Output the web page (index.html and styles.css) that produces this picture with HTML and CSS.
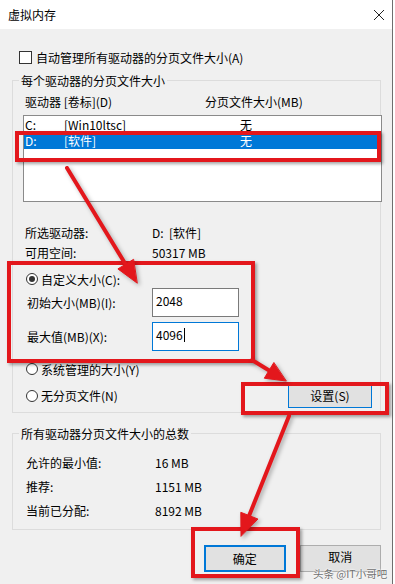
FILE: index.html
```html
<!DOCTYPE html>
<html lang="zh-CN">
<head>
<meta charset="utf-8">
<title>虚拟内存</title>
<link rel="stylesheet" href="styles.css">
</head>
<body>
<div class="window">
  <div class="titlebar">
    <span class="title">虚拟内存</span>
    <svg class="close" width="12" height="12" viewBox="0 0 12 12"><path d="M1 1 L11 11 M11 1 L1 11" stroke="#222" stroke-width="1" fill="none"/></svg>
  </div>
  <div class="main">
    <div class="check-row">
      <span class="checkbox"></span>
      <span>自动管理所有驱动器的分页文件大小(A)</span>
    </div>

    <fieldset class="group g1">
      <legend>每个驱动器的分页文件大小</legend>
      <div class="g1-inner">
        <div class="list-head">
          <span class="col-drive">驱动器 [卷标](D)</span>
          <span>分页文件大小(MB)</span>
        </div>
        <div class="listbox">
          <div class="lrow"><span class="c1">C:</span><span class="c2">[Win10ltsc]</span><span>无</span></div>
          <div class="lrow sel"><span class="c1">D:</span><span class="c2">[软件]</span><span>无</span></div>
        </div>
        <div class="info-row first"><span class="lab">所选驱动器:</span><span>D:&nbsp;&nbsp;[软件]</span></div>
        <div class="info-row"><span class="lab">可用空间:</span><span>50317 MB</span></div>

        <div class="radio-row custom"><span class="radio on"></span><span>自定义大小(C):</span></div>
        <div class="field-row"><span class="flab">初始大小(MB)(I):</span><span class="input">2048</span></div>
        <div class="field-row second"><span class="flab">最大值(MB)(X):</span><span class="input focus">4096<span class="caret"></span></span></div>
        <div class="radio-row system"><span class="radio"></span><span>系统管理的大小(Y)</span></div>
        <div class="last-row">
          <div class="radio-row"><span class="radio"></span><span>无分页文件(N)</span></div>
          <span class="btn default thin">设置(S)</span>
        </div>
      </div>
    </fieldset>

    <fieldset class="group g2">
      <legend>所有驱动器分页文件大小的总数</legend>
      <div class="g2-inner">
        <div class="sum-row"><span class="slab">允许的最小值:</span><span>16 MB</span></div>
        <div class="sum-row"><span class="slab">推荐:</span><span>1151 MB</span></div>
        <div class="sum-row"><span class="slab">当前已分配:</span><span>8192 MB</span></div>
      </div>
    </fieldset>

    <div class="buttons">
      <span class="btn default">确定</span>
      <span class="btn"><span class="btn-text">取消</span></span>
    </div>
  </div>
</div>

<div class="mark m1"></div>
<div class="mark m2"></div>
<div class="mark m3"></div>
<div class="mark m4"></div>

<svg class="arrows" width="395" height="584" viewBox="0 0 395 584">
  <g fill="#e3171c" stroke="#e3171c" stroke-width="4" stroke-linecap="round">
    <line x1="67" y1="168" x2="126" y2="265"/>
    <polygon stroke-width="1" points="137,283 117.9,268.9 133.3,259.5"/>
    <line x1="252" y1="360" x2="270" y2="371"/>
    <polygon stroke-width="1" points="286,381 264.3,378.2 273.7,362.8"/>
    <line x1="289" y1="416" x2="249" y2="516"/>
    <polygon stroke-width="1" points="241,536 240.8,512.3 257.6,518.9"/>
  </g>
</svg>

<div class="watermark">头条 @IT小哥吧</div>
</body>
</html>
```

FILE: styles.css
```css
* { box-sizing: border-box; }

html, body {
  margin: 0;
  padding: 0;
}

body {
  width: 395px;
  height: 584px;
  background: #ffffff;
  font-family: "Noto Sans CJK SC", "Noto Sans", sans-serif;
  font-size: 12px;
  color: #000;
  overflow: hidden;
  position: relative;
}

.window {
  width: 393px;
  height: 584px;
  border-right: 1px solid #6e6e6e;
  display: flex;
  flex-direction: column;
}

.titlebar {
  height: 29px;
  background: #fff;
  display: flex;
  align-items: center;
  justify-content: space-between;
  padding: 0 7px 0 8px;
  line-height: 17px;
}

.close { display: block; }

.main {
  flex: 1;
  background: #f0f0f0;
  padding: 0 11px 0 12px;
  line-height: 17px;
}

.check-row {
  display: flex;
  align-items: center;
  height: 17px;
  margin-top: 20px;
  padding-left: 7px;
  gap: 4px;
}

.checkbox {
  width: 13px;
  height: 13px;
  border: 1px solid #333;
  background: #fff;
}

.group {
  margin: 0;
  padding: 0;
  border: 1px solid #dcdcdc;
  min-width: 0;
}

.group legend {
  margin-left: 6px;
  padding: 0 2px;
  line-height: 17px;
}

.g1 { margin-top: 6px; }

.g1-inner {
  padding: 0 0 4px 10px;
}

.list-head {
  display: flex;
  margin-top: 4px;
  height: 17px;
  padding-left: 2px;
}

.col-drive { width: 180px; }

.listbox {
  margin-top: 5px;
  margin-right: -2px;
  height: 87px;
  background: #fff;
  border: 1px solid #8a8a8a;
}

.lrow {
  display: flex;
  height: 17px;
  padding-left: 1px;
}

.lrow .c1 { width: 39px; }
.lrow .c2 { width: 176px; }

.lrow.sel {
  background: #0078d7;
  color: #fff;
  margin-top: -1px;
}

.info-row {
  display: flex;
  align-items: center;
  height: 20px;
  padding-left: 2px;
}

.info-row.first { margin-top: 20px; }

.info-row .lab { width: 127px; }

.radio-row {
  display: flex;
  align-items: center;
  height: 20px;
  padding-left: 3px;
  gap: 3px;
}

.radio-row.custom {
  margin-top: 8px;
  height: 18px;
}

.radio {
  width: 12px;
  height: 12px;
  border: 1px solid #333;
  border-radius: 50%;
  background: #fff;
  display: flex;
  align-items: center;
  justify-content: center;
}

.radio.on::after {
  content: "";
  width: 6px;
  height: 6px;
  border-radius: 50%;
  background: #333;
}

.field-row {
  display: flex;
  align-items: center;
  height: 29px;
}

.field-row.second { margin-top: 5px; }

.flab {
  width: 129px;
  padding-left: 4px;
}

.input {
  width: 87px;
  height: 29px;
  background: #fff;
  border: 1px solid #7a7a7a;
  padding: 3px 0 0 3px;
  display: flex;
  align-items: flex-start;
}

.input.focus { border-color: #0078d7; }

.caret {
  display: inline-block;
  width: 1px;
  height: 14px;
  background: #000;
  margin-left: 1px;
  margin-top: 2px;
}

.radio-row.system { margin-top: 8px; }

.last-row {
  margin-top: 4px;
  height: 25px;
  display: flex;
  align-items: center;
  justify-content: space-between;
  padding-right: 8px;
}

.btn {
  display: flex;
  align-items: center;
  justify-content: center;
  width: 84px;
  height: 27px;
  background: #e1e1e1;
  border: 1px solid #adadad;
}

.btn-text {
  line-height: 14px;
  margin-top: -3px;
}

.btn.default { border: 2px solid #0078d7; }
.btn.default.thin { border-width: 1px; height: 25px; }

.g2 { margin-top: 12px; }

.g2-inner {
  padding: 10px 0 7px 0;
}

.sum-row {
  display: flex;
  align-items: center;
  height: 24px;
  padding-left: 13px;
}

.sum-row:first-child { height: 20px; margin-bottom: 2px; }

.slab { width: 129px; }

.buttons {
  display: flex;
  gap: 14px;
  margin-top: 15px;
  padding-left: 192px;
}

/* annotation overlays */
.mark {
  position: absolute;
  border: 4px solid #e3171c;
  box-shadow: 2px 2px 3px rgba(0, 0, 0, 0.35);
  pointer-events: none;
}

.m1 { left: 15px; top: 131px; width: 366px; height: 31px; }
.m2 { left: 7px; top: 261px; width: 248px; height: 102px; }
.m3 { left: 241px; top: 382px; width: 148px; height: 33px; }
.m4 { left: 191px; top: 527px; width: 109px; height: 51px; }

.arrows {
  position: absolute;
  left: 0;
  top: 0;
  pointer-events: none;
  filter: drop-shadow(2px 2px 2px rgba(0, 0, 0, 0.3));
}

.watermark {
  position: absolute;
  left: 313px;
  top: 568px;
  font-size: 10.5px;
  line-height: 11px;
  color: #707070;
  text-shadow: 0 0 2px #fff, 0 0 2px #fff;
}
```
